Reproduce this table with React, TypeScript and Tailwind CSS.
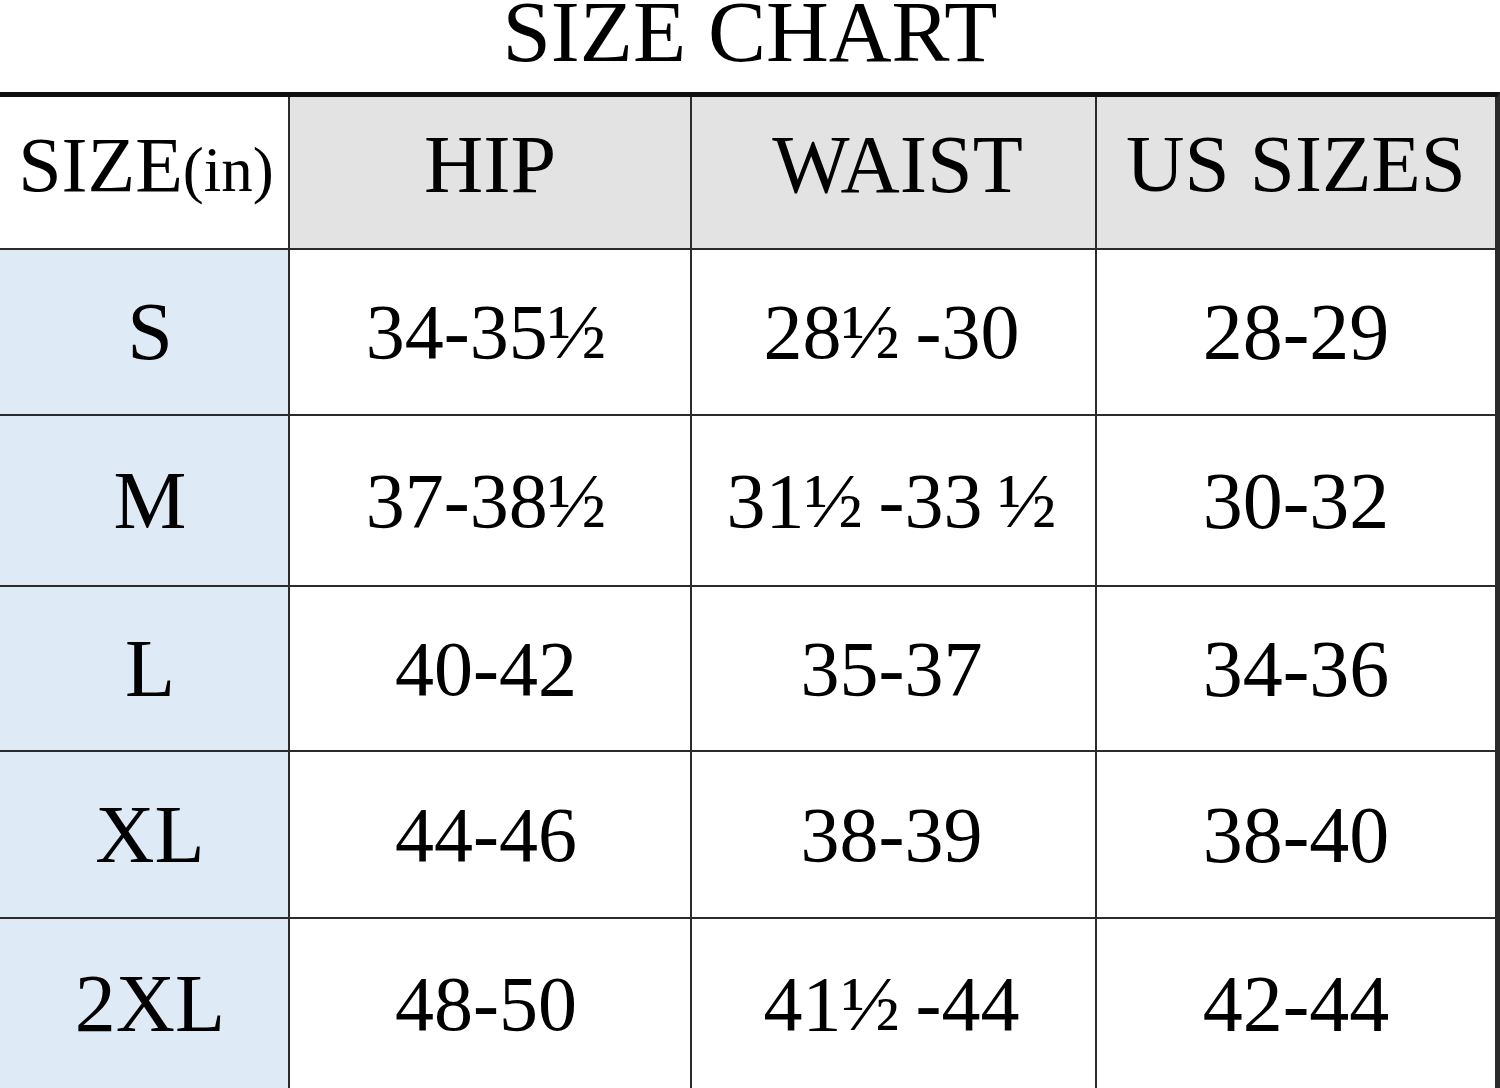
import React from "react";

const rows = [
  { size: "S", hip: "34-35½", waist: "28½\u2009-30", us: "28-29", h: "h-[166px]" },
  { size: "M", hip: "37-38½", waist: "31½\u2009-33\u2009½", us: "30-32", h: "h-[171px]" },
  { size: "L", hip: "40-42", waist: "35-37", us: "34-36", h: "h-[165px]" },
  { size: "XL", hip: "44-46", waist: "38-39", us: "38-40", h: "h-[167px]" },
  { size: "2XL", hip: "48-50", waist: "41½\u2009-44", us: "42-44", h: "h-[172px]" },
];

const cell = "flex items-center justify-center border-r-2 border-b-2 border-[#2b2b2b]";
const head = "h-[153px] pb-4 leading-none";

const App: React.FC = () => {
  return (
    <div
      className="w-[1500px] h-[1088px] overflow-hidden bg-white text-black"
      style={{ fontFamily: '"Liberation Serif", "Times New Roman", serif' }}
    >
      <div className="h-[92px] flex justify-center">
        <h1 className="text-[87px] leading-[64px] font-normal">SIZE CHART</h1>
      </div>
      <div className="border-t-[5px] border-[#111] border-r-[3px] border-r-[#2b2b2b]">
        <div className="grid grid-cols-[290px_402px_405px_400px]">
          <div className={`${cell} ${head} bg-white`}>
            <span className="text-[78px] pl-1">
              SIZE<span className="text-[63px]">(in)</span>
            </span>
          </div>
          <div className={`${cell} ${head} bg-[#e3e3e3] text-[82px]`}>HIP</div>
          <div className={`${cell} ${head} bg-[#e3e3e3] text-[82px]`}>
            <span className="pl-2">WAIST</span>
          </div>
          <div className={`${cell} ${head} bg-[#e3e3e3] text-[81px] border-r-0`}>US SIZES</div>
          {rows.map((r) => (
            <React.Fragment key={r.size}>
              <div className={`${cell} ${r.h} bg-[#deeaf6] text-[82px] leading-none`}>
                <span className="pl-3">{r.size}</span>
              </div>
              <div className={`${cell} ${r.h} text-[78px] leading-none`}>
                <span className="pr-2">{r.hip}</span>
              </div>
              <div className={`${cell} ${r.h} text-[78px] leading-none`}>
                <span className="pr-1">{r.waist}</span>
              </div>
              <div className={`${cell} ${r.h} text-[80px] leading-none border-r-0`}>{r.us}</div>
            </React.Fragment>
          ))}
        </div>
      </div>
    </div>
  );
};

export default App;
